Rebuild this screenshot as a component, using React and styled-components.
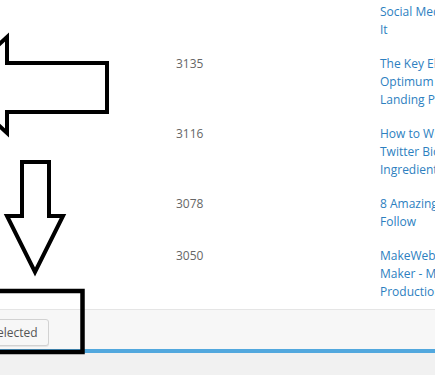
import React from 'react';
import styled, { createGlobalStyle } from 'styled-components';

const GlobalStyle = createGlobalStyle`
  html, body {
    margin: 0;
    padding: 0;
    background: #f1f1f1;
    overflow: hidden;
  }
  body {
    font-family: "Open Sans", "Noto Sans", sans-serif;
  }
`;

const Screen = styled.div`
  position: relative;
  width: 435px;
  height: 375px;
  overflow: hidden;
  background: #f1f1f1;
`;

const Table = styled.div`
  margin-top: -5px;
  background: #fff;
  border-bottom: 1px solid #e5e5e5;
`;

const Row = styled.div`
  display: grid;
  grid-template-columns: 168px 204px 1fr;
  font-size: 12px;
  line-height: 18px;
`;

const Cell = styled.div`
  padding: 8px;
  white-space: nowrap;
`;

const Views = styled(Cell)`
  color: #666;
`;

const TitleLink = styled(Cell)`
  color: #2d7fbf;
`;

const TableNav = styled.div`
  display: flex;
  align-items: flex-start;
  height: 39px;
  padding-top: 9px;
  box-sizing: border-box;
  background: #f7f7f7;
`;

const Button = styled.button`
  margin-left: -60px;
  height: 27px;
  padding: 0 10px;
  border: 1px solid #d2d2d2;
  border-radius: 3px;
  background: #f7f7f7;
  color: #555;
  font-family: inherit;
  font-size: 12px;
  line-height: 25px;
  box-shadow: 0 1px 0 #e6e6e6;
`;

const BlueBar = styled.div`
  height: 4px;
  background: #52a8de;
`;

const Overlay = styled.svg`
  position: absolute;
  top: 0;
  left: 0;
  pointer-events: none;
`;

const posts = [
  { id: '', lines: ['Social Media Marketing: Do', 'It'] },
  { id: '3135', lines: ['The Key Elements of an', 'Optimum Performing', 'Landing Page'] },
  { id: '3116', lines: ['How to Write a Perfect', 'Twitter Bio: The', 'Ingredients You Need'] },
  { id: '3078', lines: ['8 Amazing Blogs to', 'Follow'] },
  { id: '3050', lines: ['MakeWebBetter Badge', 'Maker - Make Your', 'Production Ready'] },
];

export default function App() {
  return (
    <>
      <GlobalStyle />
      <Screen>
        <Table>
          {posts.map((p, i) => (
            <Row key={i}>
              <Cell />
              <Views>{p.id}</Views>
              <TitleLink>
                {p.lines.map((l, j) => (
                  <div key={j}>{l}</div>
                ))}
              </TitleLink>
            </Row>
          ))}
        </Table>
        <TableNav>
          <Button>Delete Selected</Button>
        </TableNav>
        <BlueBar />
        <Overlay width="435" height="375" viewBox="0 0 435 375">
          <g fill="none" stroke="#000" strokeWidth="4" strokeLinejoin="miter">
            <polygon points="107,63 7,63 7,37 -45,85 7,133 7,112 107,112" />
            <polygon points="22,162 49,162 49,216 63,216 35,272 7,216 22,216" />
            <rect x="-10" y="291" width="92.5" height="61" strokeWidth="4.5" />
          </g>
        </Overlay>
      </Screen>
    </>
  );
}
